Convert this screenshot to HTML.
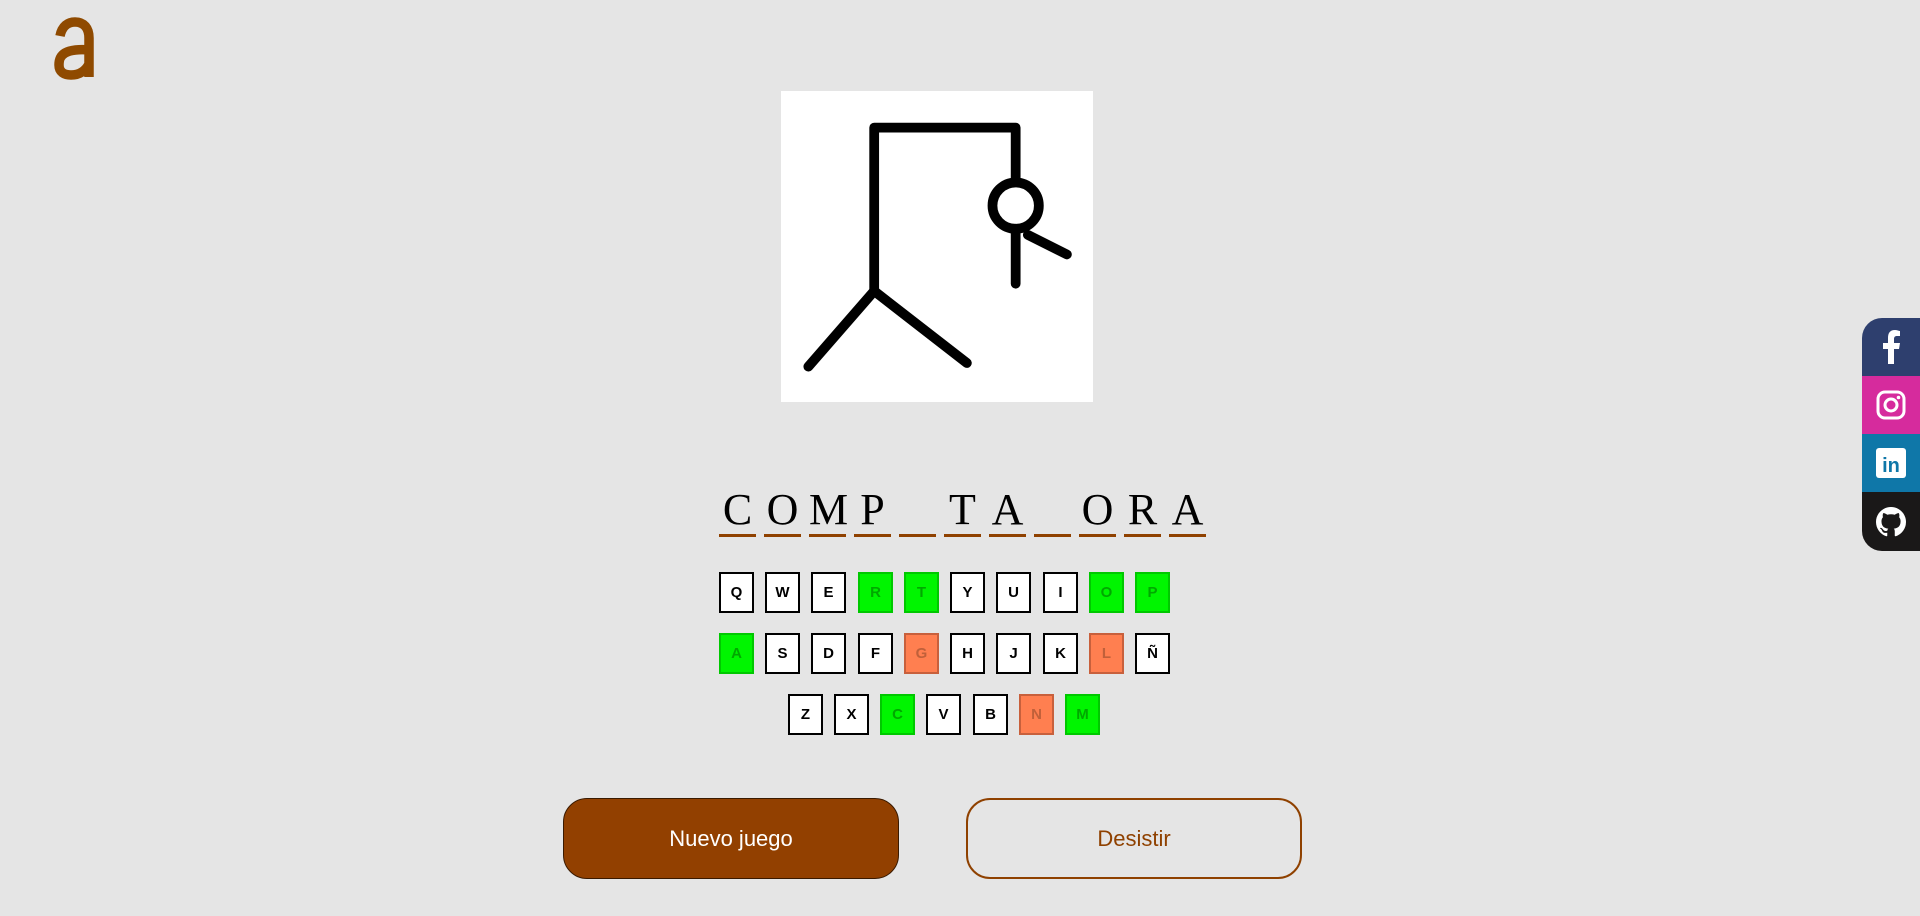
<!DOCTYPE html>
<html><head><meta charset="utf-8"><style>
body{margin:0;width:1920px;height:916px;background:#e5e5e5;position:relative;overflow:hidden;font-family:"Liberation Sans",sans-serif}
.logo{position:absolute;left:0;top:0}
.img{position:absolute;left:781px;top:91px;width:312px;height:311px;background:#fff}
.word{position:absolute;left:719px;top:480px}
.ch{position:absolute;width:37px;height:54px;border-bottom:3px solid #8f4100;text-align:center;font-family:"Liberation Serif",serif;font-size:44px;line-height:60px;color:#000}
.k{position:absolute;width:31px;height:37px;border:2px solid #000;background:#fff;font-weight:bold;font-size:15px;text-align:center;line-height:37px;color:#000}
.g{background:#00f500;border-color:#00c800;color:#00a800}
.o{background:#ff7f50;border-color:#c8603c;color:#c0603a}
.btn{position:absolute;top:798px;width:334px;height:79px;border-radius:24px;font-size:22px;text-align:center;line-height:79px}
.soc{position:absolute;left:1862px;width:58px;height:58px;display:flex;align-items:center;justify-content:center}
</style></head><body>
<svg class="logo" width="120" height="100"><path d="M60 36C62 26 68 22 75 22C84 22 89 28 89 38V77M89 50C80 49 70 50 65 53C60 56 59 60 59 65C59 72 64 75 71 75C80 75 86 70 89 64" fill="none" stroke="#8f4a00" stroke-width="9.5"/></svg>
<div class="img"><svg width="312" height="311" viewBox="0 0 255 255"><g fill="none" stroke="#000" stroke-width="8" stroke-linecap="round" stroke-linejoin="round"><path d="M76 164V30H192V74"/><circle cx="192" cy="94" r="19"/><path d="M192 113V158M202 118L234 134M76 164L22 226M76 164L152 223"/></g></svg></div>
<div class="word">
<div class="ch" style="left:0">C</div><div class="ch" style="left:45px">O</div><div class="ch" style="left:90px">M</div><div class="ch" style="left:135px">P</div><div class="ch" style="left:180px"></div><div class="ch" style="left:225px">T</div><div class="ch" style="left:270px">A</div><div class="ch" style="left:315px"></div><div class="ch" style="left:360px">O</div><div class="ch" style="left:405px">R</div><div class="ch" style="left:450px">A</div>
</div>
<div class="k" style="left:719px;top:572px">Q</div><div class="k" style="left:765px;top:572px">W</div><div class="k" style="left:811px;top:572px">E</div><div class="k g" style="left:858px;top:572px">R</div><div class="k g" style="left:904px;top:572px">T</div><div class="k" style="left:950px;top:572px">Y</div><div class="k" style="left:996px;top:572px">U</div><div class="k" style="left:1043px;top:572px">I</div><div class="k g" style="left:1089px;top:572px">O</div><div class="k g" style="left:1135px;top:572px">P</div>
<div class="k g" style="left:719px;top:633px">A</div><div class="k" style="left:765px;top:633px">S</div><div class="k" style="left:811px;top:633px">D</div><div class="k" style="left:858px;top:633px">F</div><div class="k o" style="left:904px;top:633px">G</div><div class="k" style="left:950px;top:633px">H</div><div class="k" style="left:996px;top:633px">J</div><div class="k" style="left:1043px;top:633px">K</div><div class="k o" style="left:1089px;top:633px">L</div><div class="k" style="left:1135px;top:633px">Ñ</div>
<div class="k" style="left:788px;top:694px">Z</div><div class="k" style="left:834px;top:694px">X</div><div class="k g" style="left:880px;top:694px">C</div><div class="k" style="left:926px;top:694px">V</div><div class="k" style="left:973px;top:694px">B</div><div class="k o" style="left:1019px;top:694px">N</div><div class="k g" style="left:1065px;top:694px">M</div>
<div class="btn" style="left:563px;background:#924000;color:#fff;border:1px solid #3a1a00">Nuevo juego</div>
<div class="btn" style="left:966px;border:2px solid #8f4100;color:#8f4100;box-sizing:border-box;line-height:77px;height:81px;width:336px">Desistir</div>
<div class="soc" style="top:318px;background:#2e3f6e;border-top-left-radius:20px"><svg width="22" height="34" viewBox="0 0 22 34"><path d="M14 34V19h5l1-6h-6V9c0-2 1-3 3-3h3V1C19 1 17 0 15 0 10 0 8 3 8 8v5H3v6h5v15z" fill="#fff"/></svg></div>
<div class="soc" style="top:376px;background:#d62b9d"><svg width="30" height="30" viewBox="0 0 30 30"><rect x="2" y="2" width="26" height="26" rx="7" fill="none" stroke="#fff" stroke-width="3"/><circle cx="15" cy="15" r="6" fill="none" stroke="#fff" stroke-width="3"/><circle cx="22.5" cy="7.5" r="1.8" fill="#fff"/></svg></div>
<div class="soc" style="top:434px;background:#0f77a8"><svg width="30" height="30" viewBox="0 0 30 30"><rect width="30" height="30" rx="3" fill="#fff"/><text x="15" y="24" text-anchor="middle" font-family="Liberation Sans" font-weight="bold" font-size="20" fill="#0f77a8">in</text></svg></div>
<div class="soc" style="top:492px;height:59px;background:#1a1818;border-bottom-left-radius:20px"><svg width="30" height="30" viewBox="0 0 16 16"><path fill="#fff" d="M8 0C3.58 0 0 3.580 0 8c0 3.54 2.290 6.53 5.470 7.59.4.07.55-.17.55-.38 0-.19-.01-.82-.01-1.49-2.01.37-2.53-.49-2.690-.94-.09-.23-.48-.94-.82-1.13-.28-.15-.68-.52-.01-.53.63-.01 1.08.58 1.23.82.72 1.210 1.87.87 2.33.66.07-.52.28-.87.51-1.07-1.78-.2-3.64-.89-3.64-3.95 0-.87.31-1.59.82-2.15-.08-.2-.36-1.02.08-2.12 0 0 .67-.21 2.2.82.64-.18 1.32-.27 2-.27.68 0 1.36.09 2 .27 1.53-1.04 2.2-.82 2.2-.82.44 1.1.16 1.92.08 2.12.51.56.82 1.27.82 2.15 0 3.07-1.87 3.75-3.65 3.95.29.25.54.73.54 1.48 0 1.07-.01 1.93-.01 2.2 0 .21.15.46.55.38A8.013 8.013 0 0016 8c0-4.42-3.58-8-8-8z"/></svg></div>
</body></html>
